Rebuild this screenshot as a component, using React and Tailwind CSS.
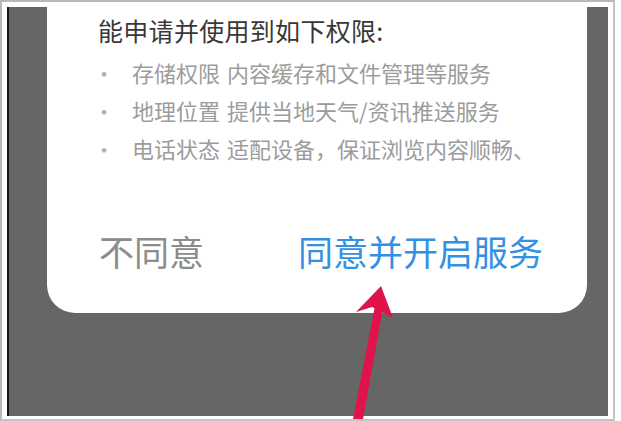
export default function App() {
  const items = [
    ['存储权限', '内容缓存和文件管理等服务'],
    ['地理位置', '提供当地天气/资讯推送服务'],
    ['电话状态', '适配设备，保证浏览内容顺畅、'],
  ]

  return (
    <div
      className="relative w-[621px] h-[421px] bg-white overflow-hidden"
      style={{ fontFamily: '"Noto Sans CJK SC", "Noto Sans", sans-serif' }}
    >
      <div className="w-[615px] h-[421px] border-2 border-t-[#b9b9b9] border-l-[#b9b9b9] border-r-[#c4c4c4] border-b-[#c4c4c4] pt-[5px] pl-[5px] pr-[5px] pb-[3px]">
        <div className="h-full bg-[#666666] border-l-2 border-[#1a1a1a] overflow-hidden">
          <div className="ml-[38px] mr-[21px] bg-white rounded-b-[28px] pt-[7px] pb-[38px]">
            <div className="pl-[51px] text-[25px] leading-[32px] tracking-[0.3px] text-[#383838]">
              能申请并使用到如下权限:
            </div>
            <div className="mt-[7px] flex flex-col">
              {items.map(([a, b]) => (
                <div key={a} className="flex items-center h-[38px] pl-[46px] text-[22px] text-[#9c9c9c]">
                  <span className="w-[39px] text-[#b3b3b3]">·</span>
                  <span>{a}</span>
                  <span className="ml-[7px]">{b}</span>
                </div>
              ))}
            </div>
            <div className="mt-[60px] flex items-center justify-between pl-[52px] pr-[44px] h-[48px] text-[35px] leading-[48px]">
              <span className="text-[#8c8c8c]">不同意</span>
              <span className="text-[#3490e3]">同意并开启服务</span>
            </div>
          </div>
        </div>
      </div>
      <svg className="absolute left-0 top-0 pointer-events-none" width="621" height="421" viewBox="0 0 621 421">
        <path d="M353 419 L363 419 L383 308 L375 306 Z" fill="#e0144a" />
        <path d="M381 286 L356 312 L372 307 L393 318 Z" fill="#e0144a" />
      </svg>
    </div>
  )
}
